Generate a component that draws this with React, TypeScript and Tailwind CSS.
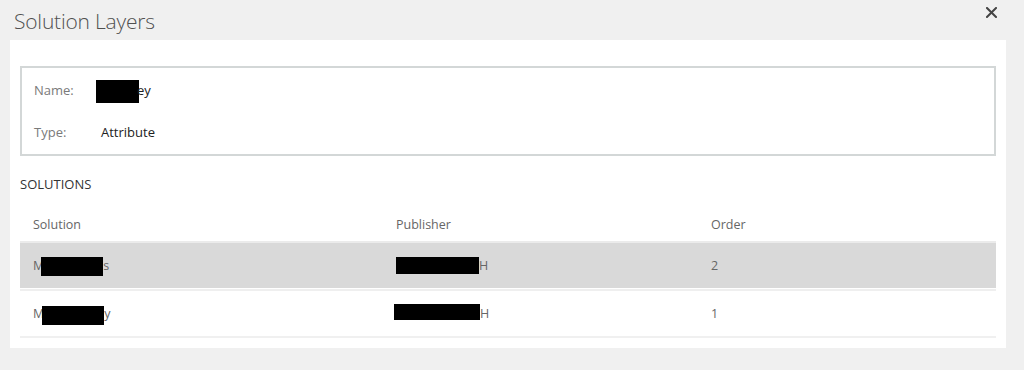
import React from "react";

const Box = ({ w, h, className = "" }: { w: string; h: string; className?: string }) => (
  <span className={`inline-block bg-black align-middle ${w} ${h} ${className}`} />
);

export default function App() {
  return (
    <div
      className="w-[1024px] h-[370px] bg-[#f0f0f0] overflow-hidden"
      style={{ fontFamily: '"Open Sans", "Noto Sans", sans-serif' }}
    >
      <div className="h-[40px] flex items-start justify-between pl-[14px] pr-[27px]">
        <div className="text-[21px] font-light text-[#505050] leading-none pt-[11px] tracking-[-0.2px]">
          Solution Layers
        </div>
        <svg className="mt-[7px]" width="11" height="11" viewBox="0 0 11 11">
          <path d="M1 1 L10 10 M10 1 L1 10" stroke="#444" strokeWidth="2" strokeLinecap="square" />
        </svg>
      </div>
      <div className="mx-[10px] w-[996px] h-[308px] bg-white px-[10px] pt-[26px]">
        <div className="border-2 border-[#d3d7d7] h-[90px] pl-[12px] flex flex-col text-[13px]">
          <div className="flex items-center h-[46px]">
            <span className="w-[67px] text-[#7a7a7a]">Name:</span>
            <span className="text-[#222] flex items-center">
              <Box w="w-[43px]" h="h-[23px]" className="-ml-[5px]" />
              <span className="-ml-[2px]">ey</span>
            </span>
          </div>
          <div className="flex items-center h-[38px]">
            <span className="w-[67px] text-[#7a7a7a]">Type:</span>
            <span className="text-[#222]">Attribute</span>
          </div>
        </div>
        <div className="mt-[19px] text-[13px] text-[#333] leading-[18px]">SOLUTIONS</div>
        <div className="mt-[14px] text-[12.5px]">
          <div className="grid grid-cols-[363px_315px_1fr] h-[36px] pt-[2px] items-center pl-[13px] text-[#666] border-b-2 border-[#ebebeb]">
            <span>Solution</span>
            <span>Publisher</span>
            <span>Order</span>
          </div>
          <div className="pb-[1px]">
            <div className="grid grid-cols-[363px_315px_1fr] h-[45px] pt-[2px] items-center pl-[13px] text-[#666] bg-[#d9d9d9]">
              <span className="flex items-center">
                M<Box w="w-[62px]" h="h-[19px]" className="-ml-[3px]" />s
              </span>
              <span className="flex items-center">
                <Box w="w-[83px]" h="h-[17px]" className="-mt-[2px]" />H
              </span>
              <span className="text-[#666]">2</span>
            </div>
          </div>
          <div className="border-t-2 border-[#efefef] pb-[1px]">
            <div className="grid grid-cols-[363px_315px_1fr] h-[44px] pt-[2px] items-center pl-[13px] text-[#666]">
              <span className="flex items-center">
                M<Box w="w-[62px]" h="h-[19px]" className="-ml-[2px] mt-[3px]" />y
              </span>
              <span className="flex items-center">
                <Box w="w-[86px]" h="h-[16px]" className="-ml-[2px] -mt-[5px]" />H
              </span>
              <span className="text-[#666]">1</span>
            </div>
          </div>
          <div className="border-t-2 border-[#f0f0f0]" />
        </div>
      </div>
    </div>
  );
}
